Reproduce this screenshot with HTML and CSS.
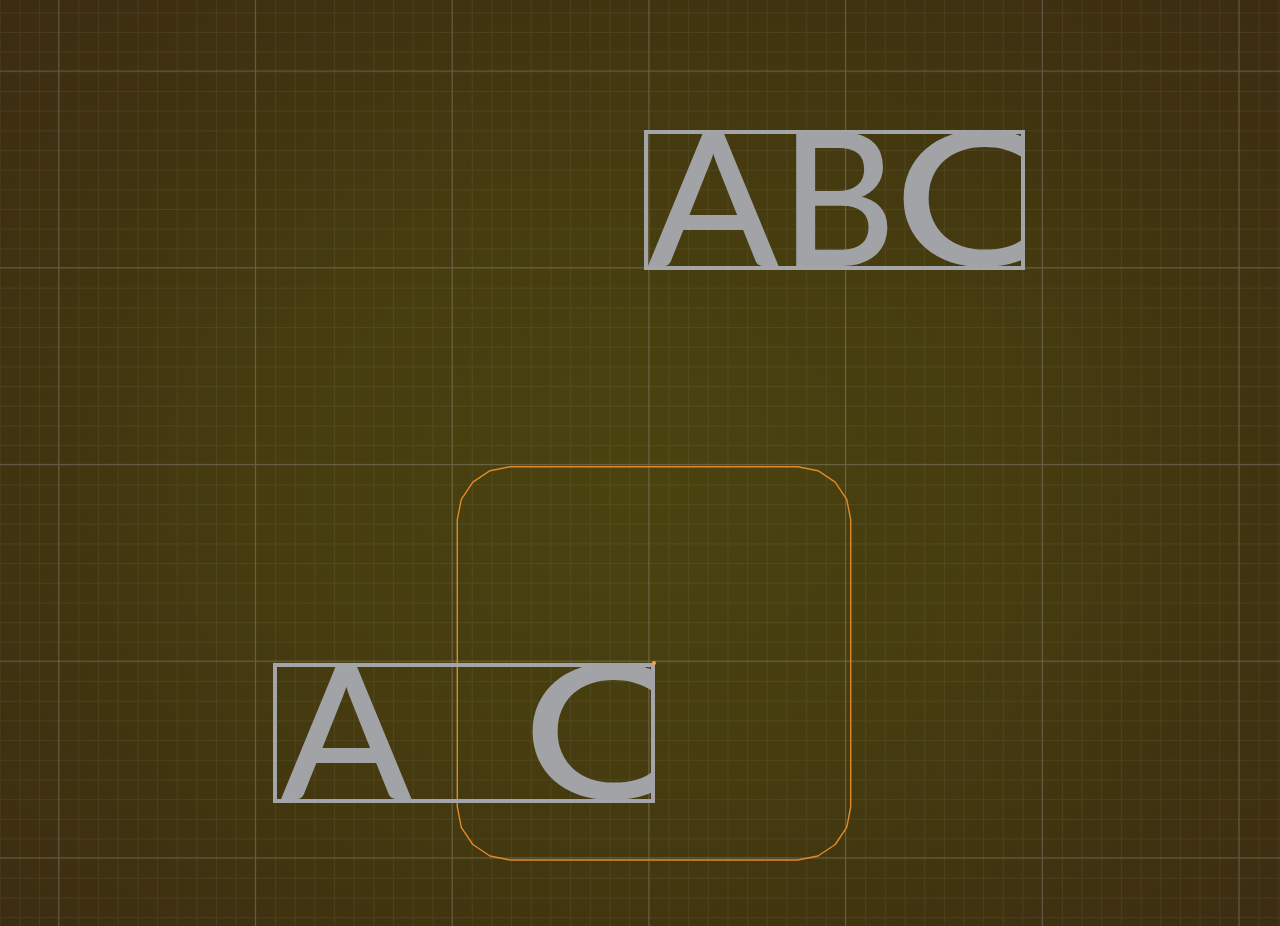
FILE: index.html
```html
<!DOCTYPE html>
<html>
<head>
<meta charset="utf-8">
<title>Viewport</title>
<link rel="stylesheet" href="styles.css">
</head>
<body>
<div class="viewport">
  <svg class="grid" width="1280" height="926" viewBox="0 0 1280 926">
    <defs>
      <pattern id="minor" x="19.36" y="12.33" width="19.67" height="19.67" patternUnits="userSpaceOnUse">
        <path d="M0 0.5H19.67M0.5 0V19.67" class="minor-line"/>
      </pattern>
      <pattern id="major" x="58.2" y="70.5" width="196.7" height="196.7" patternUnits="userSpaceOnUse">
        <path d="M0 0.5H196.7M0.5 0V196.7" class="major-line"/>
      </pattern>
    </defs>
    <rect width="1280" height="926" fill="url(#minor)"/>
    <rect width="1280" height="926" fill="url(#major)"/>
  </svg>

  <svg class="outline" width="1280" height="926" viewBox="0 0 1280 926">
    <polygon class="curve" points="457.3,519.7 461.3,499.4 472.8,482.2 490,470.7 510.3,466.7 797.7,466.7 818,470.7 835.2,482.2 846.7,499.4 850.7,519.7 850.7,807 846.7,827.3 835.2,844.5 818,856 797.7,860 510.3,860 490,856 472.8,844.5 461.3,827.3 457.3,807"/>
  </svg>

  <div class="textbox textbox-top">
    <span class="letter letter-a letter-a-top">A</span>
    <span class="letter letter-b">B</span>
    <span class="letter letter-c">C</span>
  </div>

  <div class="textbox textbox-bottom">
    <span class="letter letter-a letter-a-bottom">A</span>
    <span class="letter-gap"></span>
    <span class="letter letter-c">C</span>
  </div>

  <span class="origin-dot"></span>
</div>
</body>
</html>
```

FILE: styles.css
```css
html, body {
  margin: 0;
  padding: 0;
  background: #3a2b10;
}

.viewport {
  position: relative;
  width: 1280px;
  height: 926px;
  overflow: hidden;
  background: radial-gradient(ellipse 75% 80% at 50% 52%, #4a430f 0%, #463c0f 40%, #3f3210 70%, #3a2a10 100%);
}

.grid,
.outline {
  position: absolute;
  left: 0;
  top: 0;
}

.minor-line {
  fill: none;
  stroke: rgba(190, 190, 200, 0.09);
  stroke-width: 1;
  shape-rendering: crispEdges;
}

.major-line {
  fill: none;
  stroke: rgba(190, 190, 205, 0.27);
  stroke-width: 1;
  shape-rendering: crispEdges;
}

.curve {
  fill: none;
  stroke: #e0892a;
  stroke-width: 1.4;
  stroke-linejoin: round;
}

.textbox {
  position: absolute;
  box-sizing: border-box;
  height: 140px;
  border: 4px solid #a3a5a8;
  overflow: clip;
  overflow-clip-margin: 4px;
  display: flex;
  align-items: flex-end;
}

.textbox-top {
  left: 644px;
  top: 130px;
  width: 381px;
}

.textbox-bottom {
  left: 273px;
  top: 663px;
  width: 382px;
}

.letter {
  flex-shrink: 0;
  font-family: Lato, "Open Sans", sans-serif;
  font-size: 190px;
  line-height: 0.774;
  color: #a1a3a6;
  -webkit-text-stroke: 2px #a1a3a6;
  white-space: nowrap;
  transform-origin: left bottom;
  transform: translateY(-1.5px) scaleY(0.97);
}

.letter-a-top {
  margin-left: 1px;
  width: 129px;
}

.letter-a-bottom {
  margin-left: 5px;
  width: 125px;
}

.letter-b {
  margin-left: 3px;
  width: 113px;
  transform: translateY(-1.5px) scale(0.93, 0.97);
}

.letter-c {
  transform: translateY(-1.5px) scale(1.2, 0.97);
}

.letter-gap {
  flex-shrink: 0;
  width: 116px;
  height: 1px;
}

.origin-dot {
  position: absolute;
  left: 652.3px;
  top: 661.3px;
  width: 4px;
  height: 4px;
  border-radius: 50%;
  background: #ffa033;
}
```
